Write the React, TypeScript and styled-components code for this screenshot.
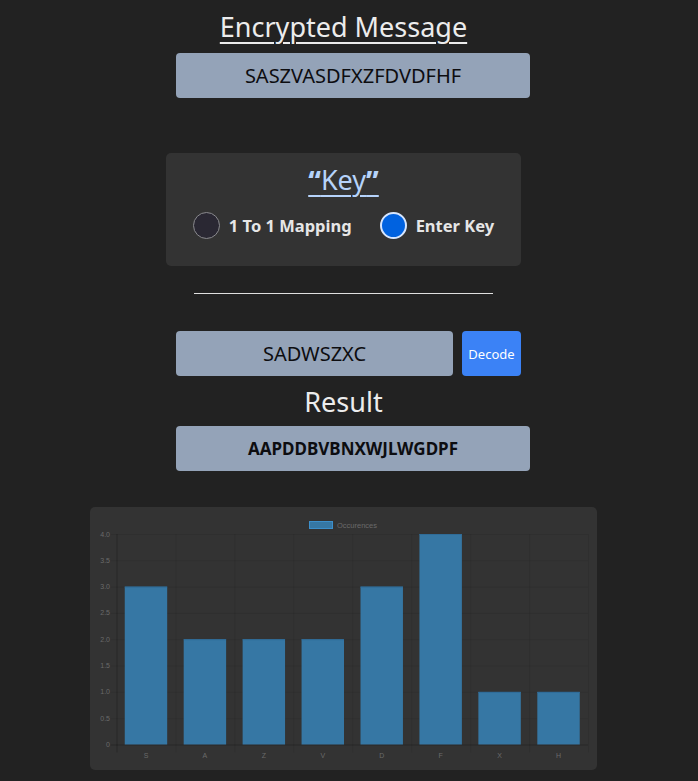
import React from "react";
import styled, { createGlobalStyle } from "styled-components";

const Global = createGlobalStyle`
  html, body { margin: 0; background: #222222; }
  body { font-family: "Noto Sans", "Open Sans", sans-serif; }
`;

const Page = styled.main`
  width: 687px;
  display: flex;
  flex-direction: column;
  align-items: center;
  padding-top: 10px;
  padding-bottom: 11px;
`;

const Heading = styled.h1<{ $color?: string; $underline?: boolean; $top?: number }>`
  margin: ${(p) => p.$top ?? 0}px 0 0;
  font-size: 27px;
  line-height: 34px;
  font-weight: 400;
  color: ${(p) => p.$color ?? "#ececec"};
  text-decoration: ${(p) => (p.$underline ? "underline" : "none")};
  text-decoration-thickness: 2px;
  text-underline-offset: 5px;
`;

const Quote = styled.span`
  font-weight: 800;
`;

const Column = styled.section<{ $top?: number }>`
  width: 355px;
  box-sizing: border-box;
  padding-left: 10px;
  margin-top: ${(p) => p.$top ?? 0}px;
  display: flex;
  gap: 9px;
`;

const Field = styled.div<{ $w: number; $size: number; $bold?: boolean }>`
  width: ${(p) => p.$w}px;
  flex: none;
  height: 45px;
  background: #94a3b8;
  border-radius: 4px;
  display: flex;
  align-items: center;
  justify-content: center;
  font-size: ${(p) => p.$size}px;
  font-weight: ${(p) => (p.$bold ? 700 : 400)};
  color: #0d0d10;
`;

const DecodeButton = styled.button`
  width: 59px;
  height: 45px;
  flex: none;
  border: 0;
  border-radius: 4px;
  background: #3b82f6;
  color: #ffffff;
  font-family: inherit;
  font-size: 13px;
  padding: 0;
`;

const KeyPanel = styled.section`
  margin-top: 55px;
  width: 355px;
  box-sizing: border-box;
  padding: 10px 0 27px;
  background: #333333;
  border-radius: 5px;
  display: flex;
  flex-direction: column;
  align-items: center;
`;

const RadioRow = styled.div`
  margin-top: 15px;
  display: flex;
  align-items: center;
  gap: 28px;
`;

const RadioLabel = styled.label`
  display: flex;
  align-items: center;
  gap: 9px;
  font-size: 16.5px;
  font-weight: 700;
  color: #e6e6e6;
`;

const RadioInput = styled.input`
  appearance: none;
  margin: 0;
  width: 27px;
  height: 27px;
  border-radius: 50%;
  box-sizing: border-box;
  background: #2a2833;
  border: 1px solid #8a8a8e;
  &:checked {
    background: #0062e0;
    border: 2px solid #d6e6ff;
  }
`;

const Divider = styled.hr`
  margin: 27px 0 0;
  width: 299px;
  height: 0;
  border: 0;
  border-top: 1px solid #e0e0e0;
`;

const ChartCard = styled.section`
  margin-top: 36px;
  width: 507px;
  height: 263px;
  background: #333333;
  border-radius: 5px;
  overflow: hidden;
`;

const data: [string, number][] = [
  ["S", 3],
  ["A", 2],
  ["Z", 2],
  ["V", 2],
  ["D", 3],
  ["F", 4],
  ["X", 1],
  ["H", 1],
];

const Chart: React.FC = () => {
  const left = 26.5;
  const right = 498;
  const top = 27;
  const bottom = 237.5;
  const cw = (right - left) / data.length;
  const bw = cw * 0.72;
  const yOf = (v: number) => bottom - (v / 4) * (bottom - top);
  const ticks = [0, 0.5, 1, 1.5, 2, 2.5, 3, 3.5, 4];
  const grid = "rgba(0,0,0,0.07)";
  const txt = "#6a6a6a";
  return (
    <svg width="507" height="263" viewBox="0 0 507 263" fontFamily="'Liberation Sans', Arial, sans-serif">
      <rect x="219.5" y="14.5" width="23" height="7" fill="#3677a4" stroke="#3c8fcb" strokeWidth="1" />
      <text x="247" y="21" fontSize="7.5" fill={txt}>Occurences</text>
      {ticks.map((t) => (
        <g key={t}>
          <line x1={left - 6} x2={right} y1={yOf(t) + 0.5} y2={yOf(t) + 0.5} stroke={grid} />
          <text x="20" y={yOf(t) + 2.5} fontSize="7" fill={txt} textAnchor="end">
            {t === 0 ? "0" : t.toFixed(1)}
          </text>
        </g>
      ))}
      {data.map((_, i) => (
        <line key={i} x1={left + i * cw + 0.5} x2={left + i * cw + 0.5} y1={top} y2={bottom + 8} stroke={grid} />
      ))}
      <line x1={right + 0.5} x2={right + 0.5} y1={top} y2={bottom + 8} stroke={grid} />
      <line x1={left + 0.5} x2={left + 0.5} y1={top} y2={bottom + 8} stroke="rgba(0,0,0,0.15)" />
      <line x1={left - 6} x2={right} y1={bottom + 0.5} y2={bottom + 0.5} stroke="rgba(0,0,0,0.15)" />
      {data.map(([label, v], i) => {
        const x = left + i * cw + (cw - bw) / 2;
        return (
          <g key={label}>
            <rect x={x} y={yOf(v)} width={bw} height={bottom - yOf(v)} fill="#3677a4" />
            <line x1={x} x2={x + bw} y1={yOf(v) + 0.5} y2={yOf(v) + 0.5} stroke="#2f6c98" />
            <text x={left + i * cw + cw / 2} y="251" fontSize="7" fill={txt} textAnchor="middle">
              {label}
            </text>
          </g>
        );
      })}
    </svg>
  );
};

export default function App() {
  return (
    <>
      <Global />
      <Page>
        <Heading $underline>Encrypted Message</Heading>
        <Column $top={9}>
          <Field $w={354} $size={20}>SASZVASDFXZFDVDFHF</Field>
        </Column>
        <KeyPanel>
          <Heading $underline $color="#b6d3fb">
            <Quote>“</Quote>Key<Quote>”</Quote>
          </Heading>
          <RadioRow>
            <RadioLabel>
              <RadioInput type="radio" name="mode" readOnly />
              1 To 1 Mapping
            </RadioLabel>
            <RadioLabel>
              <RadioInput type="radio" name="mode" defaultChecked />
              Enter Key
            </RadioLabel>
          </RadioRow>
        </KeyPanel>
        <Divider />
        <Column $top={37}>
          <Field $w={277} $size={20}>SADWSZXC</Field>
          <DecodeButton>Decode</DecodeButton>
        </Column>
        <Heading $top={9}>Result</Heading>
        <Column $top={7}>
          <Field $w={354} $size={17} $bold>AAPDDBVBNXWJLWGDPF</Field>
        </Column>
        <ChartCard>
          <Chart />
        </ChartCard>
      </Page>
    </>
  );
}
